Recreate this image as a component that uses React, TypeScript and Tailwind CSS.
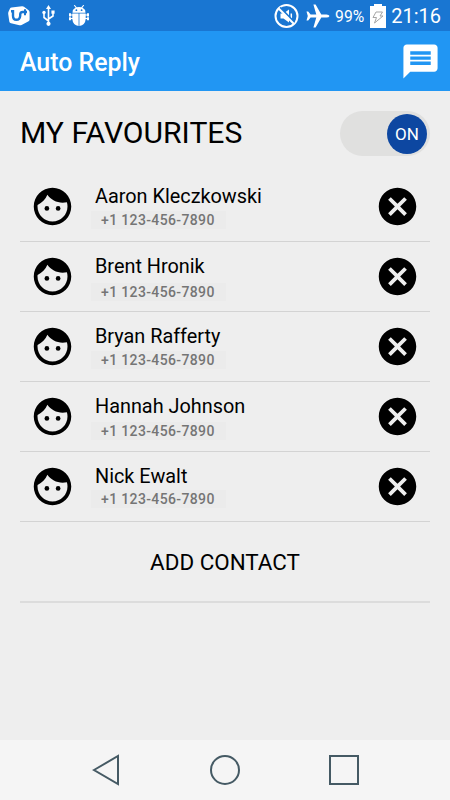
import { useState } from "react";
import { MdCancel, MdMessage } from "react-icons/md";

const contacts = [
  { name: "Aaron Kleczkowski", phone: "+1 123-456-7890", gap: "mt-[2px]" },
  { name: "Brent Hronik", phone: "+1 123-456-7890", gap: "mt-[4px]" },
  { name: "Bryan Rafferty", phone: "+1 123-456-7890", gap: "mt-[2px]" },
  { name: "Hannah Johnson", phone: "+1 123-456-7890", gap: "mt-[3px]" },
  { name: "Nick Ewalt", phone: "+1 123-456-7890", gap: "mt-[1px]" },
];

const FaceIcon = ({ className }: { className?: string }) => (
  <svg className={className} viewBox="0 0 24 24" fill="currentColor">
    <circle cx="9" cy="13" r="1.25" />
    <circle cx="15" cy="13" r="1.25" />
    <path d="M12 2C6.48 2 2 6.48 2 12s4.48 10 10 10 10-4.48 10-10S17.52 2 12 2zm0 18c-4.41 0-8-3.59-8-8 0-.29.02-.58.05-.86 2.36-1.05 4.23-2.98 5.21-5.37C11.07 8.33 14.05 10 17.42 10c.78 0 1.53-.09 2.25-.26.21.71.33 1.47.33 2.26 0 4.41-3.59 8-8 8z" />
  </svg>
);

const StatusBar = () => (
  <div className="flex h-[31px] shrink-0 items-center bg-[#1976d2] pl-2 pr-[9px] text-white">
    {/* App badge */}
    <svg width="22" height="20" viewBox="0 0 22 20">
      <path
        d="M3.5 1.5 14 0.3Q15.2 0.2 16 0.8L20.6 4.2Q21.6 5 21.6 6.2V13.4Q21.6 14.6 20.6 15.2L13.6 19Q12.6 19.5 11.4 19.2L3 17.2Q1.6 16.8 1.3 15.4L0.2 8Q0 6.8 0.6 5.6L2 2.6Q2.5 1.6 3.5 1.5Z"
        fill="currentColor"
      />
      <path d="M3 5.3h2v4.5q0 4 3.4 4t3.8-4V8.6q0-2.6 2.6-2.6H19" fill="none" stroke="#1976d2" strokeWidth="2.4" />
      <path d="M17 3.2v6" fill="none" stroke="#1976d2" strokeWidth="2" />
    </svg>
    {/* USB */}
    <svg className="ml-[12px]" width="13" height="21" viewBox="0 0 13 21" fill="none" stroke="currentColor" strokeWidth="1.6">
      <path d="M6.5 3v15M6.5 16 2 12.5V8M6.5 14 11 11V7" />
      <path d="M6.5 0 9 4H4Z" fill="currentColor" stroke="none" />
      <circle cx="6.5" cy="18.8" r="2.1" fill="currentColor" stroke="none" />
      <circle cx="2" cy="7.5" r="1.7" fill="currentColor" stroke="none" />
      <path d="M9.4 5.5h3.2v3.2H9.4z" fill="currentColor" stroke="none" />
    </svg>
    {/* Debugging */}
    <svg className="ml-[14px]" width="20" height="21" viewBox="0 0 20 21" fill="currentColor">
      <path d="M3.5 7.8Q3.8 4 6.6 2.6L4.8.5l.9-.6 2 2.3Q10 1.6 12.3 2.2l2-2.3.9.6-1.8 2.1Q16.2 4 16.5 7.8Z" />
      <path d="M3.3 8.6h6.3V21Q3.8 20.2 3.3 14ZM10.4 8.6h6.3V14q-.5 6.2-6.3 7Z" />
      <path d="M0 8.2h2.1v3.2H0zM17.9 8.2H20v3.2h-2.1zM0 12.2h2.1v3H0zM17.9 12.2H20v3h-2.1z" />
      <path d="M2 9.6h2v1H2zM16 9.6h2v1h-2zM2 13h2v1H2zM16 13h2v1h-2z" />
      <circle cx="7.4" cy="5.2" r=".9" fill="#1976d2" />
      <circle cx="12.6" cy="5.2" r=".9" fill="#1976d2" />
    </svg>

    {/* Sound off */}
    <svg className="ml-auto" width="25" height="24" viewBox="0 0 25 24" fill="none" stroke="currentColor" strokeWidth="2">
      <circle cx="12.5" cy="12" r="11" />
      <path d="M6.5 9.5h3L15 5.5v13L9.5 14.5h-3Z" fill="currentColor" stroke="none" />
      <path d="M17.3 9.5v5" strokeWidth="1.5" />
      <path d="M6 3.5 20.5 18.5" stroke="#1976d2" strokeWidth="2" />
      <path d="M4.7 4.5 20 20" />
    </svg>
    {/* Airplane mode */}
    <svg className="ml-[7px]" width="24" height="24" viewBox="0 0 24 24" fill="currentColor">
      <path d="M23.5 12Q23 10.5 20.5 10.4H15.3L9.6.4H7.4L10.3 10.4H4.6L2.2 7.4H.5L1.8 12 .5 16.6H2.2L4.6 13.6H10.3L7.4 23.6H9.6L15.3 13.6H20.5Q23 13.5 23.5 12Z" />
    </svg>
    <span className="ml-[5px] mt-[2px] text-[15.7px] leading-5">99%</span>
    <svg className="ml-[6px]" width="16" height="24" viewBox="0 0 16 24">
      <path d="M4 0h8v2h4v22H0V2h4z" fill="currentColor" />
      <path d="M6 8h6.5L10 12h3L4.5 19l2-5.5H3z" fill="none" stroke="#a5a5a5" />
    </svg>
    <span className="ml-[5px] mt-px text-[20px] leading-6">21:16</span>
  </div>
);

const App = () => {
  const [enabled, setEnabled] = useState(true);

  return (
    <div className="flex h-[800px] w-[450px] flex-col overflow-hidden bg-[#eeeeee] font-['Roboto',sans-serif] text-black">
      <StatusBar />

      <header className="flex h-[60px] shrink-0 items-center justify-between bg-[#2196f3] pl-5 pr-[9px] text-white">
        <h1 className="mt-[3px] text-[24.9px] font-medium leading-8">Auto Reply</h1>
        <MdMessage className="size-[41px]" />
      </header>

      <main className="flex grow flex-col px-5">
        <div className="flex h-[81px] items-center justify-between pt-[4px]">
          <h2 className="-mt-[2px] text-[30.1px] leading-9">MY FAVOURITES</h2>
          <button
            className="flex h-[45px] w-[90px] items-center justify-end rounded-full bg-[#e0e0df] pr-[3px]"
            onClick={() => setEnabled(!enabled)}
          >
            <span className="flex size-[40px] items-center justify-center rounded-full bg-[#0d47a1] pt-[2px] text-[17px] text-white">
              {enabled ? "ON" : "OFF"}
            </span>
          </button>
        </div>

        <ul>
          {contacts.map((contact) => (
            <li key={contact.name} className="flex h-[70px] items-start border-b border-[#d3d3d3] px-[10px] pt-[12px]">
              <FaceIcon className="size-[45px]" />
              <div className="ml-4 mt-px flex grow flex-col items-start">
                <span className="pl-[4px] text-[19.85px] leading-6">{contact.name}</span>
                <span
                  className={`${contact.gap} h-[18px] w-[135px] bg-[#ebebeb] pl-[10px] text-[14px] font-medium leading-[18px] tracking-[0.36px] text-[#757575]`}
                >
                  {contact.phone}
                </span>
              </div>
              <MdCancel className="size-[45px]" />
            </li>
          ))}
        </ul>

        <button className="h-[81px] border-b-2 border-[#dcdcdc] pt-[3px] text-[22.4px]">ADD CONTACT</button>
      </main>

      <nav className="flex h-[60px] shrink-0 items-center justify-between bg-[#f5f5f5] pl-[92px] pr-[91px] text-[#455a64]">
        <svg width="28" height="32" viewBox="0 0 28 32" fill="none" stroke="currentColor" strokeWidth="2">
          <path d="M2 16 26 2v28Z" />
        </svg>
        <svg width="30" height="30" viewBox="0 0 30 30" fill="none" stroke="currentColor" strokeWidth="2">
          <circle cx="15" cy="15" r="14" />
        </svg>
        <svg width="30" height="30" viewBox="0 0 30 30" fill="none" stroke="currentColor" strokeWidth="2">
          <path d="M1 1h28v28H1z" />
        </svg>
      </nav>
    </div>
  );
};

export default App;
